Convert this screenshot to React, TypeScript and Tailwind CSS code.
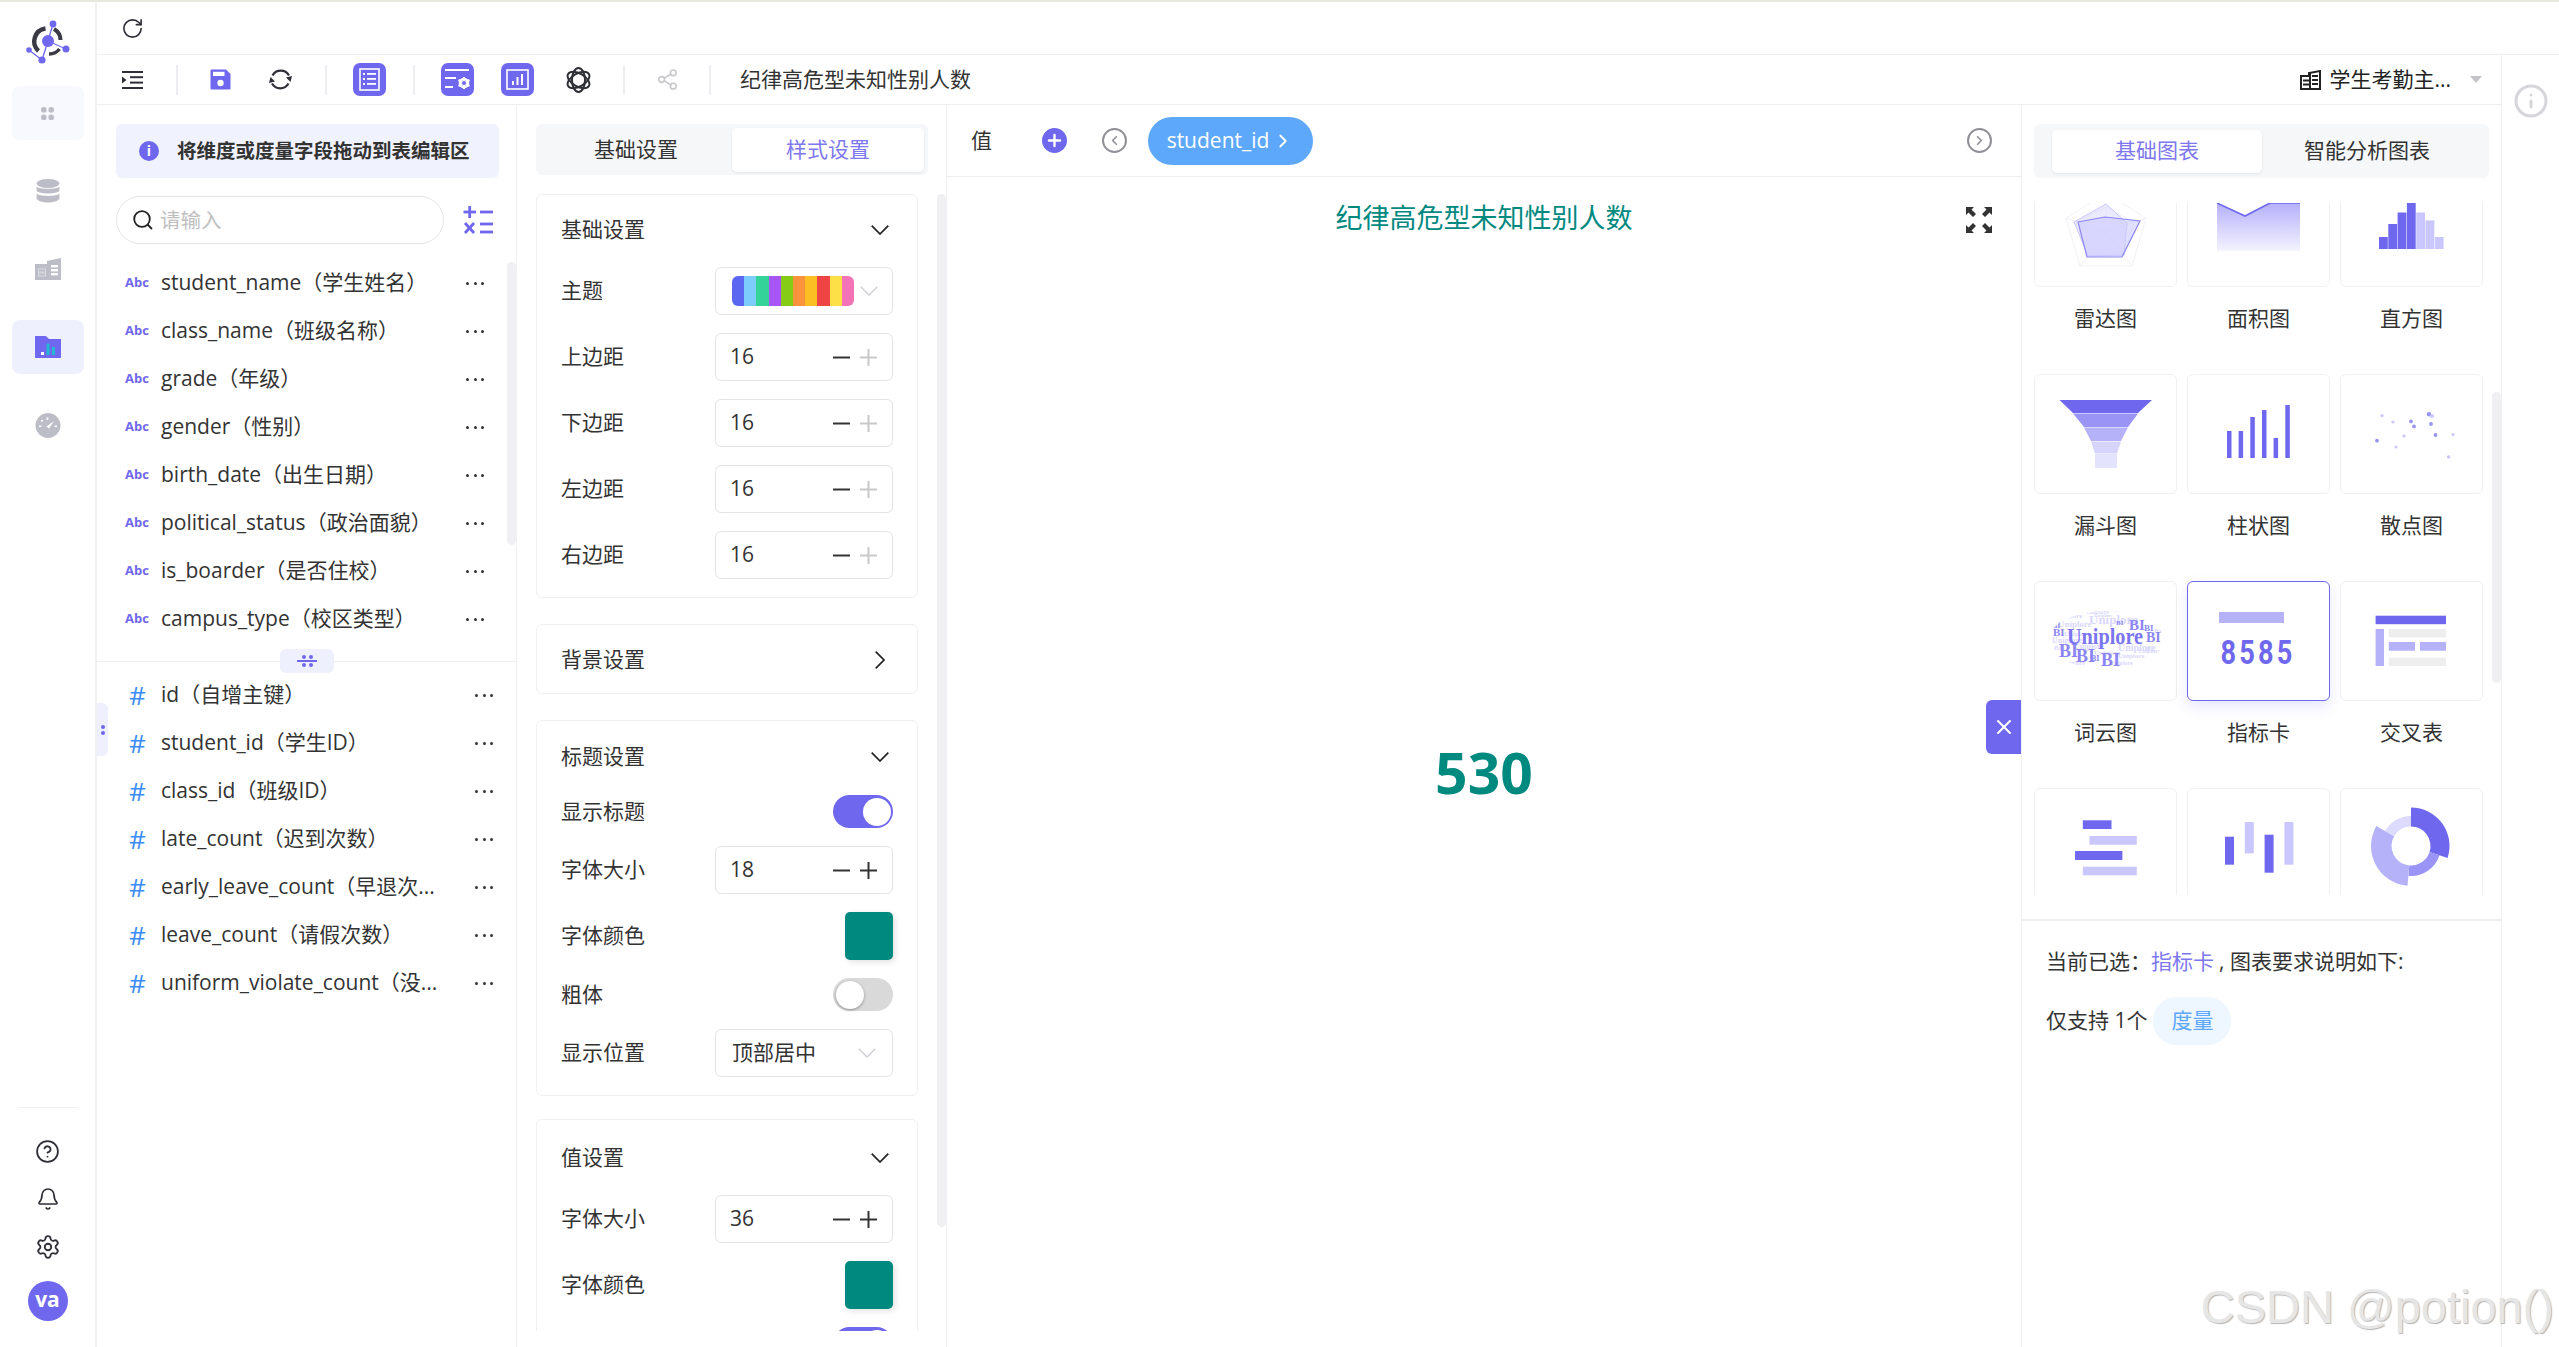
import React from "react";
import { RotateCw, Share2, CircleHelp, Bell, Settings, Info, ChevronLeft, ChevronRight as ChevR, Plus, X } from "lucide-react";

const P = "#6f68ee";
const L = "#b5b2fa";
const XL = "#c9c7fd";

const dims = [
  "student_name（学生姓名）",
  "class_name（班级名称）",
  "grade（年级）",
  "gender（性别）",
  "birth_date（出生日期）",
  "political_status（政治面貌）",
  "is_boarder（是否住校）",
  "campus_type（校区类型）",
];
const meas = [
  "id（自增主键）",
  "student_id（学生ID）",
  "class_id（班级ID）",
  "late_count（迟到次数）",
  "early_leave_count（早退次...",
  "leave_count（请假次数）",
  "uniform_violate_count（没...",
];
const theme = ["#5b67f0", "#7ccdfc", "#34d399", "#a855f7", "#84cc16", "#fb923c", "#fbbf24", "#ef4444", "#fde047", "#f472b6"];

function Dots() {
  return (
    <div className="flex w-[18px] justify-between">
      <span className="h-[3px] w-[3px] rounded-full bg-[#333]" />
      <span className="h-[3px] w-[3px] rounded-full bg-[#333]" />
      <span className="h-[3px] w-[3px] rounded-full bg-[#333]" />
    </div>
  );
}

function Sep() {
  return <div className="h-[30px] w-[2px] bg-[#eeeef2]" />;
}

function Logo() {
  return (
    <svg width="48" height="48" viewBox="0 0 48 48">
      <g stroke={P} strokeWidth="1.3">
        <line x1="24" y1="23" x2="29" y2="6" />
        <line x1="24" y1="23" x2="42" y2="31" />
        <line x1="24" y1="23" x2="18" y2="42" />
        <line x1="5" y1="32" x2="18" y2="42" />
      </g>
      <path d="M14.500 33 A13 13 0 0 1 21.500 10.500" fill="none" stroke="#3a3a44" strokeWidth="4.400" />
      <path d="M30 11 A13 13 0 0 1 36.500 22" fill="none" stroke="#3a3a44" strokeWidth="4" />
      <path d="M35.500 31 A13 13 0 0 1 25 36" fill="none" stroke="#3a3a44" strokeWidth="3.600" />
      <circle cx="24" cy="23" r="6" fill={P} />
      <circle cx="29" cy="6" r="3.400" fill={P} />
      <circle cx="5" cy="32" r="2.800" fill={P} />
      <circle cx="42" cy="31" r="3.500" fill={P} />
      <circle cx="18" cy="42" r="3.600" fill={P} />
    </svg>
  );
}

function NavDash() {
  return (
    <svg width="13" height="13" viewBox="0 0 13 13" fill="#bdbdc7">
      <rect x="0" y="0" width="5.6" height="5.6" rx="2.6" />
      <rect x="7.4" y="0" width="5.6" height="5.6" rx="2.6" />
      <rect x="0" y="7.4" width="5.6" height="5.6" rx="2.6" />
      <rect x="7.4" y="7.4" width="5.6" height="5.6" rx="2.6" />
    </svg>
  );
}
function NavDb() {
  return (
    <svg width="24" height="24" viewBox="0 0 24 24" fill="#bdbdc7">
      <ellipse cx="12" cy="4.5" rx="11.5" ry="4.5" />
      <path d="M.5 7.5c2 3.2 21 3.2 23 0v4c-1 4-22 4-23 0z" />
      <path d="M.5 14.5c2 3.2 21 3.2 23 0v4.5c-1 6-22 6-23 0z" />
    </svg>
  );
}
function NavCard() {
  return (
    <svg width="26" height="22" viewBox="0 0 26 22">
      <path d="M0 6h12V3l14-3v22H0z" fill="#bdbdc7" />
      <g fill="#fff">
        <rect x="16" y="7" width="7" height="2.4" />
        <rect x="16" y="11" width="7" height="2.4" />
        <rect x="16" y="15" width="7" height="2.4" />
      </g>
      <g stroke="#d9d9e0" fill="none" strokeWidth="1">
        <rect x="3.5" y="11" width="7" height="3" />
        <rect x="3.5" y="15" width="7" height="3" />
      </g>
    </svg>
  );
}
function NavFolder() {
  return (
    <svg width="26" height="22" viewBox="0 0 26 22">
      <path d="M0 0h11l3 3h12v19H0z" fill={P} />
      <rect x="6" y="16" width="3" height="3" fill="#fff" />
      <rect x="11.5" y="7.5" width="3" height="11.5" fill="#22b8cf" />
      <rect x="17" y="11" width="3" height="8" fill="#22b8cf" />
    </svg>
  );
}
function NavGauge() {
  return (
    <svg width="26" height="25" viewBox="0 0 26 25">
      <circle cx="13" cy="12.5" r="12.5" fill="#bdbdc7" />
      <path d="M11.5 13.5 19 8l-5 7.5z" fill="#fff" />
      <g fill="#fff">
        <rect x="4" y="12.5" width="2.4" height="1.6" />
        <rect x="11.6" y="4.4" width="1.8" height="2.4" />
        <rect x="6" y="7" width="2" height="1.6" />
        <rect x="19.6" y="12.5" width="2.4" height="1.6" />
      </g>
    </svg>
  );
}

function IcOutdent() {
  return (
    <svg width="21" height="18" viewBox="0 0 21 18" fill="#2f2f37">
      <rect x="0" y="0" width="21" height="2" />
      <rect x="8" y="5.2" width="13" height="2" />
      <rect x="8" y="10.6" width="13" height="2" />
      <rect x="0" y="16" width="21" height="2" />
      <path d="M0 5.5 4.5 9 0 12.5z" />
    </svg>
  );
}
function IcSave() {
  return (
    <svg width="21" height="21" viewBox="0 0 21 21">
      <path d="M1.5 0.5H16l4.5 4.5v14.5a1 1 0 0 1-1 1h-18a1 1 0 0 1-1-1V1.5a1 1 0 0 1 1-1z" fill={P} />
      <rect x="3" y="2.8" width="11.5" height="4.2" fill="#fff" />
      <circle cx="10.5" cy="14" r="3.2" fill="#fff" />
    </svg>
  );
}
function IcSync() {
  return (
    <svg width="23" height="23" viewBox="0 0 23 23" fill="none" stroke="#2f2f37" strokeWidth="2.2">
      <path d="M3.5 7.5A9.5 9.5 0 0 1 20 7.5" />
      <path d="M19.5 15.5A9.5 9.5 0 0 1 3 15.5" />
      <path d="M23 8 21.5 14 17 9.5z" fill="#2f2f37" stroke="none" />
      <path d="M0 15 1.5 9 6 13.5z" fill="#2f2f37" stroke="none" />
    </svg>
  );
}
function IcList() {
  return (
    <div className="flex h-[33px] w-[33px] items-center justify-center rounded-[7px] bg-[#6f68ee]">
      <svg width="21" height="23" viewBox="0 0 21 23" fill="none" stroke="#fff" strokeWidth="1.6">
        <rect x="1" y="1" width="19" height="21" />
        <g fill="#fff" stroke="none">
          <rect x="4" y="5" width="2" height="2" />
          <rect x="8" y="5" width="9" height="1.8" />
          <rect x="4" y="10" width="2" height="2" />
          <rect x="8" y="10" width="9" height="1.8" />
          <rect x="4" y="15" width="2" height="2" />
          <rect x="8" y="15" width="9" height="1.8" />
        </g>
      </svg>
    </div>
  );
}
function IcChartCfg() {
  return (
    <div className="flex h-[33px] w-[33px] items-center justify-center rounded-[7px] bg-[#6f68ee]">
      <svg width="27" height="21" viewBox="0 0 27 21" fill="#fff">
        <rect x="1" y="0" width="24" height="2" />
        <rect x="1" y="8" width="11" height="2" />
        <rect x="1" y="17" width="8" height="2" />
        <circle cx="20" cy="14" r="4" fill="none" stroke="#fff" strokeWidth="2.6" />
        <g stroke="#fff" strokeWidth="2">
          <line x1="20" y1="8" x2="20" y2="20" />
          <line x1="14.5" y1="11" x2="25.5" y2="17" />
          <line x1="14.5" y1="17" x2="25.5" y2="11" />
        </g>
        <circle cx="20" cy="14" r="2" fill={P} />
      </svg>
    </div>
  );
}
function IcChartBox() {
  return (
    <div className="flex h-[33px] w-[33px] items-center justify-center rounded-[7px] bg-[#6f68ee]">
      <svg width="23" height="21" viewBox="0 0 23 21" fill="none" stroke="#fff" strokeWidth="1.6">
        <rect x="1" y="1" width="21" height="19" />
        <g fill="#fff" stroke="none">
          <rect x="6" y="12" width="2" height="4" />
          <rect x="10.5" y="8" width="2" height="8" />
          <rect x="15" y="5" width="2" height="11" />
        </g>
      </svg>
    </div>
  );
}
function IcAtom() {
  return (
    <svg width="25" height="26" viewBox="0 0 25 26" fill="none" stroke="#2f2f37" strokeWidth="2">
      <ellipse cx="12.5" cy="13" rx="6.500" ry="12" />
      <ellipse cx="12.5" cy="13" rx="6.500" ry="12" transform="rotate(60 12.5 13)" />
      <ellipse cx="12.5" cy="13" rx="6.500" ry="12" transform="rotate(-60 12.5 13)" />
    </svg>
  );
}
function IcOps() {
  return (
    <svg width="30" height="30" viewBox="0 0 30 30" stroke={P} strokeWidth="2.8" fill="none">
      <line x1="0.5" y1="7" x2="13" y2="7" />
      <line x1="6.7" y1="1" x2="6.7" y2="13" />
      <line x1="17" y1="7" x2="30" y2="7" />
      <line x1="2" y1="18" x2="11" y2="28" />
      <line x1="11" y1="18" x2="2" y2="28" />
      <line x1="17" y1="19" x2="30" y2="19" />
      <line x1="17" y1="27" x2="30" y2="27" />
    </svg>
  );
}
function IcSearch() {
  return (
    <svg width="20" height="20" viewBox="0 0 20 20" fill="none" stroke="#222" strokeWidth="1.8">
      <circle cx="9" cy="9" r="7.8" />
      <line x1="14.5" y1="14.5" x2="19" y2="19" />
    </svg>
  );
}
function IcFull() {
  return (
    <svg width="26" height="26" viewBox="0 0 26 26" fill="#333">
      <path d="M0 0h8L5.5 2.5 10 7 7 10 2.5 5.5 0 8z" />
      <path d="M26 0h-8l2.500 2.500L16 7l3 3 4.500-4.500L26 8z" />
      <path d="M0 26h8l-2.500-2.500L10 19l-3-3-4.500 4.500L0 18z" />
      <path d="M26 26h-8l2.500-2.500L16 19l3-3 4.500 4.500L26 18z" />
    </svg>
  );
}
function IcBuilding() {
  return (
    <svg width="21" height="20" viewBox="0 0 21 20">
      <path d="M1 6h8V3l11-2v18H1z" fill="none" stroke="#222" strokeWidth="2" />
      <g fill="#222">
        <rect x="12" y="5" width="6" height="2" />
        <rect x="12" y="9" width="6" height="2" />
        <rect x="12" y="13" width="6" height="2" />
        <rect x="3" y="9.500" width="6" height="2" />
        <rect x="3" y="13.500" width="6" height="2" />
        <rect x="9" y="3" width="2" height="16" />
      </g>
    </svg>
  );
}
function MinusIc() {
  return (
    <svg width="17" height="17" viewBox="0 0 17 17" stroke="#333" strokeWidth="2">
      <line x1="0" y1="8.500" x2="17" y2="8.500" />
    </svg>
  );
}
function PlusIc({ dim }: { dim?: boolean }) {
  return (
    <svg width="17" height="17" viewBox="0 0 17 17" stroke={dim ? "#c8c8c8" : "#333"} strokeWidth="2">
      <line x1="0" y1="8.500" x2="17" y2="8.500" />
      <line x1="8.500" y1="0" x2="8.500" y2="17" />
    </svg>
  );
}
function CaretDown({ gray }: { gray?: boolean }) {
  return (
    <svg width="18" height="10" viewBox="0 0 18 10" fill="none" stroke={gray ? "#cfcfd4" : "#222"} strokeWidth={gray ? 1.4 : 1.7}>
      <path d="M0.7 0.7 9 9 17.300 0.700" />
    </svg>
  );
}
function CaretRight() {
  return (
    <svg width="10" height="18" viewBox="0 0 10 18" fill="none" stroke="#222" strokeWidth="1.7">
      <path d="M0.700 0.700 9 9 0.700 17.300" />
    </svg>
  );
}

function Stepper({ v, dim }: { v: string; dim?: boolean }) {
  return (
    <div className="flex h-[48px] w-[178px] items-center rounded-[6px] border border-[#e3e3e8] pl-[14px] pr-[15px] text-[21px] text-[#333]">
      <span className="flex-1">{v}</span>
      <MinusIc />
      <div className="ml-[10px]"><PlusIc dim={dim} /></div>
    </div>
  );
}
function Row({ label, children }: { label?: string; children: React.ReactNode }) {
  return (
    <div className="flex items-center justify-between text-[21px] text-[#333]">
      <span>{label}</span>
      {children}
    </div>
  );
}
function Toggle({ on }: { on?: boolean }) {
  return on ? (
    <div className="flex h-[33px] w-[60px] items-center justify-end rounded-full bg-[#6f68ee] pr-[2px]">
      <span className="h-[28px] w-[28px] rounded-full bg-white" />
    </div>
  ) : (
    <div className="flex h-[33px] w-[60px] items-center rounded-full bg-[#d9d9d9] pl-[3px]">
      <span className="h-[28px] w-[28px] rounded-full bg-white shadow-[0_1px_3px_rgba(0,0,0,0.35)]" />
    </div>
  );
}
function Swatch() {
  return <div className="h-[48px] w-[48px] rounded-[5px] bg-[#00897f] shadow-[2px_2px_6px_rgba(0,0,0,0.12)]" />;
}
function Card({ title, head, open, children, cls }: { title: string; head: string; open?: boolean; children?: React.ReactNode; cls?: string }) {
  return (
    <div className={"w-[382px] rounded-[6px] border border-[#f0f0f3] px-[24px] " + (cls ?? "")}>
      <div className={"flex items-center justify-between pr-[4px] text-[21px] text-[#333] " + head}>
        <span>{title}</span>
        {open ? <CaretDown /> : <div className="pr-[4px]"><CaretRight /></div>}
      </div>
      {children}
    </div>
  );
}

function arc(cx: number, cy: number, r0: number, r1: number, a0: number, a1: number) {
  const p = (r: number, a: number) => {
    const t = ((a - 90) * Math.PI) / 180;
    return `${(cx + r * Math.cos(t)).toFixed(2)} ${(cy + r * Math.sin(t)).toFixed(2)}`;
  };
  const big = a1 - a0 > 180 ? 1 : 0;
  return `M${p(r1, a0)}A${r1} ${r1} 0 ${big} 1 ${p(r1, a1)}L${p(r0, a1)}A${r0} ${r0} 0 ${big} 0 ${p(r0, a0)}Z`;
}

const C = ({ children }: { children: React.ReactNode }) => (
  <svg width="143" height="120" viewBox="0 0 143 120" className="block">
    {children}
  </svg>
);

const lightWords: [number, number, number, string][] = [
  [22, 37, 7, "Uniplore"], [52, 33, 6, "Uniplore"], [80, 31, 6, "BI"], [24, 46, 9, "Uniplore"], [55, 43, 13, "Uniplore"],
  [18, 62, 8, "Uniplore"], [20, 69, 7, "BI"], [28, 84, 6, "Uniplore"], [84, 70, 10, "Uniplore"], [84, 77, 7, "Uniplore"],
  [40, 68, 8, "Uniplore"], [76, 84, 6, "Uniplore"], [60, 74, 7, "Uniplore"], [104, 72, 6, "Uniplore"], [50, 92, 5, "Uniplore"],
  [120, 52, 7, "BI"], [112, 70, 7, "BI"], [30, 55, 7, "Uniplore"], [60, 36, 5, "Uniplore"],
];

const charts: { key: string; name?: string; sel?: boolean; el: React.ReactNode }[] = [
  {
    key: "a",
    name: "雷达图",
    el: (
      <C>
        <g fill="none" stroke="#f1f1f6">
          <polygon points="72,26 112,51 98,99 46,99 32,51" />
          <polygon points="72,40 100,55 90,88 54,88 42,55" />
          <line x1="72" y1="65" x2="72" y2="26" />
          <line x1="72" y1="65" x2="112" y2="51" />
          <line x1="72" y1="65" x2="98" y2="99" />
          <line x1="72" y1="65" x2="46" y2="99" />
          <line x1="72" y1="65" x2="32" y2="51" />
        </g>
        <polygon points="72,37 93,56 90,88 54,89 40,55" fill="#dcdafd" fillOpacity="0.6" stroke="#c9c7fd" />
        <polygon points="44,55 71,50 106,54 88,90 53,90" fill="#c9c7fd" fillOpacity="0.55" stroke="#8d87f2" strokeWidth="1.2" />
      </C>
    ),
  },
  {
    key: "b",
    name: "面积图",
    el: (
      <C>
        <defs>
          <linearGradient id="ga" x1="0" y1="0" x2="0" y2="1">
            <stop offset="0" stopColor="#b5b0fa" />
            <stop offset="1" stopColor="#f4f3ff" />
          </linearGradient>
        </defs>
        <path d="M30 36 58 49 83 36H113V84H30z" fill="url(#ga)" />
        <path d="M30 36 58 49 83 36H113" fill="none" stroke={P} strokeWidth="1.6" />
      </C>
    ),
  },
  {
    key: "c",
    name: "直方图",
    el: (
      <C>
        <g fill={P}>
          <rect x="39" y="70" width="8.800" height="12" />
          <rect x="48.300" y="57" width="8.800" height="25" />
          <rect x="57.600" y="45.500" width="8.800" height="36.500" />
          <rect x="66.900" y="30" width="8.800" height="52" />
        </g>
        <g fill={XL}>
          <rect x="76.200" y="45.500" width="8.800" height="36.500" />
          <rect x="85.500" y="53.400" width="8.800" height="28.600" />
          <rect x="94.800" y="70" width="8.800" height="12" />
        </g>
      </C>
    ),
  },
  {
    key: "d",
    name: "漏斗图",
    el: (
      <C>
        <path d="M25.500 26H118L104 39H39z" fill={P} />
        <path d="M39 39.500H104L94 53H50z" fill="#9994f5" />
        <path d="M50 53.500H94L87 67H57z" fill="#b5b2fa" />
        <path d="M57 67.500H87L83 79.500H61z" fill="#d6d4fc" />
        <rect x="61" y="80" width="22" height="14" fill="#e4e3fd" />
      </C>
    ),
  },
  {
    key: "e",
    name: "柱状图",
    el: (
      <C>
        <g fill={P}>
          <rect x="40" y="57" width="4.500" height="27" />
          <rect x="51.600" y="57" width="4.500" height="27" />
          <rect x="63.300" y="43" width="4.500" height="41" />
          <rect x="75" y="36" width="4.500" height="48" />
          <rect x="86.600" y="64" width="4.500" height="20" />
          <rect x="98.300" y="31" width="4.500" height="53" />
        </g>
      </C>
    ),
  },
  {
    key: "f",
    name: "散点图",
    el: (
      <C>
        {[
          [42, 41.700, 1.600, "#c9c7fd"],
          [53, 48, 1.600, "#c9c7fd"],
          [71, 47.400, 1.900, "#9994f5"],
          [74, 52.400, 1.900, "#9994f5"],
          [89, 40.300, 2.300, "#9994f5"],
          [92, 42, 2, "#c9c7fd"],
          [91, 50, 1.900, "#9994f5"],
          [95.500, 61, 1.900, "#9994f5"],
          [113, 60.600, 1.600, "#c9c7fd"],
          [64, 62, 1.600, "#c9c7fd"],
          [37, 66.700, 1.900, "#9994f5"],
          [56, 73, 1.500, "#c9c7fd"],
          [108.600, 83, 1.700, "#c9c7fd"],
        ].map((d, i) => (
          <circle key={i} cx={d[0] as number} cy={d[1] as number} r={d[2] as number} fill={d[3] as string} />
        ))}
      </C>
    ),
  },
  {
    key: "g",
    name: "词云图",
    el: (
      <C>
        <defs>
          <clipPath id="cloud">
            <ellipse cx="72" cy="59" rx="58" ry="29" />
          </clipPath>
        </defs>
        <g clipPath="url(#cloud)" fontFamily="'Liberation Serif',serif" fontWeight="700">
          <g fill="#d9d7fd">
            {lightWords.map((w, i) => (
              <text key={i} x={w[0]} y={w[1]} fontSize={w[2]}>{w[3]}</text>
            ))}
          </g>
          <text x="33" y="62.500" fontSize="23" textLength="76" lengthAdjust="spacingAndGlyphs" fill="#7a74f0">Uniplore</text>
          <g fill="#8a85f3">
            <text x="95" y="49" fontSize="15">BI</text>
            <text x="110" y="50" fontSize="9">BI</text>
            <text x="18" y="47" fontSize="8">BI</text>
            <text x="19" y="55" fontSize="11">BI</text>
            <text x="112" y="61" fontSize="14">BI</text>
            <text x="25" y="76" fontSize="18">BI</text>
            <text x="42" y="81" fontSize="18">BI</text>
            <text x="67" y="85" fontSize="18">BI</text>
            <text x="57" y="80" fontSize="8">BI</text>
            <text x="82" y="44" fontSize="7">BI</text>
          </g>
        </g>
      </C>
    ),
  },
  {
    key: "h",
    name: "指标卡",
    sel: true,
    el: (
      <C>
        <rect x="32" y="31" width="65" height="11" fill={L} />
        <text transform="translate(71 83) scale(0.8 1)" textAnchor="middle" fontFamily="Roboto,sans-serif" fontWeight="700" fontSize="34" letterSpacing="4" fill={P}>
          8585
        </text>
      </C>
    ),
  },
  {
    key: "i",
    name: "交叉表",
    el: (
      <C>
        <rect x="35.600" y="34.700" width="70.400" height="8.500" fill={P} />
        <rect x="35.600" y="48" width="8.400" height="37" fill={L} />
        <rect x="48.800" y="48" width="57.200" height="8.300" fill="#eeeeef" />
        <rect x="48.800" y="61" width="26.200" height="8.700" fill={L} />
        <rect x="80" y="61" width="26" height="8.700" fill={L} />
        <rect x="48.800" y="76.700" width="57.200" height="8.300" fill="#eeeeef" />
      </C>
    ),
  },
  {
    key: "j",
    el: (
      <C>
        <rect x="48.800" y="32.300" width="28.700" height="8.700" fill={P} />
        <rect x="55.400" y="48" width="47.400" height="8.700" fill={XL} />
        <rect x="41" y="63" width="47.400" height="9" fill={P} />
        <rect x="48.800" y="78.700" width="54" height="8.600" fill={XL} />
      </C>
    ),
  },
  {
    key: "k",
    el: (
      <C>
        <rect x="38" y="48.700" width="9" height="28" fill={P} />
        <rect x="57.800" y="34" width="9" height="31.300" fill={XL} />
        <rect x="77.600" y="46.700" width="9" height="38" fill={P} />
        <rect x="97.400" y="34" width="9" height="42.700" fill={XL} />
      </C>
    ),
  },
  {
    key: "l",
    el: (
      <C>
        <path d={arc(71, 58, 19.500, 38.500, 0, 108)} fill={P} />
        <path d={arc(71, 58, 19.500, 30, 108, 185)} fill="#9994f5" />
        <path d={arc(71, 58, 19.500, 40, 185, 300)} fill={L} />
        <path d={arc(71, 58, 19.500, 30, 300, 360)} fill="#dcdafd" />
      </C>
    ),
  },
];

export default function App() {
  return (
    <div className="relative flex h-[1347px] w-[2559px] overflow-hidden border-t-2 border-[#e8eadf] bg-white font-['Open_Sans','Noto_Sans_CJK_SC',sans-serif] text-[#333]">
      {/* sidebar */}
      <div className="flex w-[97px] shrink-0 flex-col items-center border-r-2 border-[#f1f1f4]">
        <div className="flex h-[84px] w-full items-center justify-center pb-[5px]">
          <Logo />
        </div>
        <div className="flex flex-col gap-[24px]">
          <div className="flex h-[54px] w-[72px] items-center justify-center rounded-[8px] bg-[#f8f9fe]"><NavDash /></div>
          <div className="flex h-[54px] w-[72px] items-center justify-center"><NavDb /></div>
          <div className="flex h-[54px] w-[72px] items-center justify-center"><NavCard /></div>
          <div className="flex h-[54px] w-[72px] items-center justify-center rounded-[8px] bg-[#eff0fe]"><NavFolder /></div>
          <div className="flex h-[54px] w-[72px] items-center justify-center"><NavGauge /></div>
        </div>
        <div className="flex-1" />
        <div className="mb-[19px] h-px w-[60px] bg-[#f0f0f3]" />
        <div className="flex h-[48px] items-center"><CircleHelp size={25} strokeWidth={1.7} className="text-[#2f2f37]" /></div>
        <div className="flex h-[48px] items-center"><Bell size={24} strokeWidth={1.7} className="text-[#2f2f37]" /></div>
        <div className="flex h-[48px] items-center"><Settings size={26} strokeWidth={1.7} className="text-[#2f2f37]" /></div>
        <div className="mb-[26px] mt-[10px] flex h-[40px] w-[40px] items-center justify-center rounded-full bg-[#6f68ee] pb-[3px] text-[21px] font-bold text-white">va</div>
      </div>

      {/* main */}
      <div className="flex min-w-0 flex-1 flex-col">
        <div className="flex h-[53px] shrink-0 items-center border-b border-[#eeeef2] pl-[24px]">
          <RotateCw size={23} strokeWidth={1.7} className="text-[#2f2f37]" />
        </div>
        <div className="flex min-h-0 flex-1">
          <div className="flex w-[2405px] shrink-0 flex-col border-r border-[#f0f0f3]">
            {/* toolbar */}
            <div className="flex h-[50px] shrink-0 items-center border-b border-[#eeeef2] pl-[25px] pr-[19px]">
              <IcOutdent />
              <div className="ml-[33px]"><Sep /></div>
              <div className="ml-[32px]"><IcSave /></div>
              <div className="ml-[38px]"><IcSync /></div>
              <div className="ml-[33px]"><Sep /></div>
              <div className="ml-[26px]"><IcList /></div>
              <div className="ml-[27px]"><Sep /></div>
              <div className="ml-[26px]"><IcChartCfg /></div>
              <div className="ml-[27px]"><IcChartBox /></div>
              <div className="ml-[32px]"><IcAtom /></div>
              <div className="ml-[32px]"><Sep /></div>
              <div className="ml-[31px]"><Share2 size={23} strokeWidth={1.6} className="text-[#c8c8cc]" /></div>
              <div className="ml-[30px]"><Sep /></div>
              <span className="ml-[29px] text-[21px] text-[#333]">纪律高危型未知性别人数</span>
              <div className="flex-1" />
              <IcBuilding />
              <span className="ml-[8px] text-[21px] text-[#222]">学生考勤主...</span>
              <div className="ml-[19px] h-0 w-0 border-x-[6px] border-t-[7px] border-x-transparent border-t-[#c4c4c8]" />
            </div>

            {/* panels */}
            <div className="flex min-h-0 flex-1">
              {/* fields */}
              <div className="relative w-[420px] shrink-0 border-r border-[#f0f0f3]">
                <div className="absolute right-0 top-[157px] h-[283px] w-[9px] rounded-full bg-[#f0f0f3]" />
                <div className="absolute left-0 top-[598px] flex h-[53px] w-[11px] flex-col items-center justify-center gap-[2px] rounded-r-[6px] bg-[#eef0fd]">
                  <span className="h-[4px] w-[4px] rounded-full bg-[#6f68ee]" />
                  <span className="h-[4px] w-[4px] rounded-full bg-[#6f68ee]" />
                </div>
                <div className="ml-[19px] mt-[19px] flex h-[54px] w-[383px] items-center rounded-[6px] bg-[#f0f2fd] pl-[23px] text-[19.5px] font-bold text-[#333]">
                  <div className="flex h-[20px] w-[20px] items-center justify-center rounded-full bg-[#6f68ee] text-[14px] font-bold leading-none text-white">i</div>
                  <span className="ml-[18px]">将维度或度量字段拖动到表编辑区</span>
                </div>
                <div className="ml-[19px] mt-[18px] flex items-center">
                  <div className="flex h-[48px] w-[328px] items-center rounded-full border border-[#e5e5e8] pl-[16px]">
                    <IcSearch />
                    <span className="ml-[7px] text-[20.5px] text-[#bfbfbf]">请输入</span>
                  </div>
                  <div className="ml-[19px]"><IcOps /></div>
                </div>
                <div className="mt-[15px]">
                  {dims.map((d) => (
                    <div key={d} className="flex h-[48px] items-center pl-[28px] pr-[32px]">
                      <span className="w-[36px] text-[13px] font-bold text-[#6f68ee]">Abc</span>
                      <span className="flex-1 text-[21px] text-[#333]">{d}</span>
                      <Dots />
                    </div>
                  ))}
                </div>
                <div className="relative mt-[18px] h-px bg-[#eeeef2]">
                  <div className="absolute left-[183px] top-[-12px] flex h-[24px] w-[54px] flex-col items-center justify-center gap-[1px] rounded-[6px] bg-[#eef0fd]">
                    <div className="flex gap-[3px]"><span className="h-[4px] w-[4px] rounded-full bg-[#6f68ee]" /><span className="h-[4px] w-[4px] rounded-full bg-[#6f68ee]" /></div>
                    <div className="h-[2px] w-[20px] bg-[#6f68ee]" />
                    <div className="flex gap-[3px]"><span className="h-[4px] w-[4px] rounded-full bg-[#6f68ee]" /><span className="h-[4px] w-[4px] rounded-full bg-[#6f68ee]" /></div>
                  </div>
                </div>
                <div className="mt-[9px]">
                  {meas.map((d) => (
                    <div key={d} className="flex h-[48px] items-center pl-[32px] pr-[23px]">
                      <span className="w-[32px] text-[26px] font-medium leading-none text-[#3b8cf5]">#</span>
                      <span className="flex-1 text-[21px] text-[#333]">{d}</span>
                      <Dots />
                    </div>
                  ))}
                </div>
              </div>

              {/* settings */}
              <div className="relative w-[430px] shrink-0 border-r border-[#f0f0f3]">
                <div className="absolute right-0 top-[89px] h-[1033px] w-[9px] rounded-full bg-[#f0f0f3]" />
                <div className="h-[1226px] overflow-hidden pl-[19px]">
                  <div className="mt-[19px] flex h-[51px] w-[392px] items-center rounded-[6px] bg-[#f6f7f9] px-[4px] pt-px text-[21px]">
                    <span className="flex-1 text-center text-[#333]">基础设置</span>
                    <span className="flex h-[44px] w-[192px] items-center justify-center rounded-[5px] bg-white text-[#7d77f0] shadow-[0_1px_3px_rgba(0,0,0,0.08)]">样式设置</span>
                  </div>
                  <div className="mt-[19px] flex flex-col gap-[26px]">
                    <Card title="基础设置" head="h-[72px] pb-[2px]" open cls="pb-[18px]">
                      <div className="flex flex-col gap-[18px]">
                        <Row label="主题">
                          <div className="flex h-[48px] w-[178px] items-center rounded-[6px] border border-[#e3e3e8] pl-[16px]">
                            <div className="flex h-[30px] w-[122px] overflow-hidden rounded-[6px]">
                              {theme.map((c) => (
                                <span key={c} className="flex-1" style={{ background: c }} />
                              ))}
                            </div>
                            <div className="ml-[6px]"><CaretDown gray /></div>
                          </div>
                        </Row>
                        <Row label="上边距"><Stepper v="16" dim /></Row>
                        <Row label="下边距"><Stepper v="16" dim /></Row>
                        <Row label="左边距"><Stepper v="16" dim /></Row>
                        <Row label="右边距"><Stepper v="16" dim /></Row>
                      </div>
                    </Card>
                    <Card title="背景设置" head="h-[68px] pt-[2px]" />
                    <Card title="标题设置" head="h-[74px] pb-[2px]" open cls="pb-[18px]">
                      <div className="flex flex-col gap-[18px]">
                        <Row label="显示标题"><Toggle on /></Row>
                        <Row label="字体大小"><Stepper v="18" /></Row>
                        <Row label="字体颜色"><Swatch /></Row>
                        <Row label="粗体"><Toggle /></Row>
                        <Row label="显示位置">
                          <div className="flex h-[48px] w-[178px] items-center justify-between rounded-[6px] border border-[#e3e3e8] pl-[16px] pr-[16px]">
                            <span>顶部居中</span>
                            <CaretDown gray />
                          </div>
                        </Row>
                      </div>
                    </Card>
                    <Card title="值设置" head="h-[75px]" open cls="-mt-[3px]">
                      <div className="flex flex-col gap-[18px]">
                        <Row label="字体大小"><Stepper v="36" /></Row>
                        <Row label="字体颜色"><Swatch /></Row>
                        <Row><Toggle on /></Row>
                      </div>
                    </Card>
                  </div>
                </div>
              </div>

              {/* canvas */}
              <div className="relative flex min-w-0 flex-1 flex-col">
                <div className="flex h-[72px] shrink-0 items-center border-b border-[#eeeef2] pl-[24px] pr-[29px]">
                  <span className="w-[71px] text-[21px] text-[#333]">值</span>
                  <div className="flex h-[25px] w-[25px] items-center justify-center rounded-full bg-[#6f68ee]"><Plus size={19} strokeWidth={3} className="text-white" /></div>
                  <div className="ml-[35px] flex h-[25px] w-[25px] items-center justify-center rounded-full border-[2.5px] border-[#8f8f96]"><ChevronLeft size={15} strokeWidth={2.6} className="text-[#8f8f96]" /></div>
                  <div className="ml-[21px] flex h-[48px] w-[165px] items-center justify-center rounded-full bg-[#5ea8fb] text-[21px] text-white">
                    student_id
                    <ChevR size={22} strokeWidth={2} className="ml-[3px]" />
                  </div>
                  <div className="flex-1" />
                  <div className="flex h-[25px] w-[25px] items-center justify-center rounded-full border-[2.5px] border-[#8f8f96]"><ChevR size={15} strokeWidth={2.6} className="text-[#8f8f96]" /></div>
                </div>
                <div className="relative flex h-[80px] shrink-0 items-center justify-center pt-[2px] text-[27px] text-[#00897f]">
                  纪律高危型未知性别人数
                  <div className="absolute right-[29px] top-[30px]"><IcFull /></div>
                </div>
                <div className="mt-[483px] text-center text-[57px] font-bold leading-[64px] text-[#00897f]">530</div>
                <div className="absolute bottom-[593px] right-[-1px] flex h-[54px] w-[36px] items-center justify-center rounded-l-[6px] bg-[#6f68ee]"><X size={24} strokeWidth={2} className="text-white" /></div>
              </div>

              {/* charts */}
              <div className="relative flex w-[480px] shrink-0 flex-col border-l border-[#f0f0f3]">
                <div className="absolute right-0 top-[287px] h-[291px] w-[9px] rounded-full bg-[#f0f0f3]" />
                <div className="ml-[12px] mt-[19px] flex h-[54px] w-[455px] items-center rounded-[6px] bg-[#f6f7f9] pl-[18px] text-[21px]">
                  <span className="flex h-[43px] w-[210px] items-center justify-center rounded-[5px] bg-white text-[#7d77f0] shadow-[0_1px_3px_rgba(0,0,0,0.08)]">基础图表</span>
                  <span className="flex-1 pr-[17px] text-center text-[#333]">智能分析图表</span>
                </div>
                <div className="ml-[12px] mt-[25px] h-[692px] overflow-hidden">
                  <div className="-mt-[36px] grid w-[448px] grid-cols-[143px_143px_143px] gap-x-[10px]">
                    {charts.map((c) => (
                      <div key={c.key} className="flex flex-col">
                        <div className={c.sel ? "h-[120px] rounded-[6px] border border-[#6f68ee] bg-white shadow-[0_6px_14px_rgba(111,104,238,0.16)]" : "h-[120px] rounded-[6px] border border-[#f0f0f3]"}>
                          <div className="-m-px">{c.el}</div>
                        </div>
                        <div className="mb-[23px] flex h-[64px] items-center justify-center text-[21px] text-[#333]">{c.name}</div>
                      </div>
                    ))}
                  </div>
                </div>
                <div className="mt-[24px] border-t-2 border-[#eeeef2] pl-[24px] text-[21px] text-[#333]">
                  <div className="mt-[26px] flex h-[30px] items-center">
                    当前已选：<span className="text-[#7d77f0]">指标卡</span><span className="ml-[5px]">, 图表要求说明如下:</span>
                  </div>
                  <div className="mt-[20px] flex h-[48px] items-center">
                    仅支持 1个
                    <span className="ml-[6px] flex h-[48px] w-[78px] items-center justify-center rounded-full bg-[#eef6ff] text-[#5ea8fb]">度量</span>
                  </div>
                </div>
              </div>
            </div>
          </div>
          {/* info gutter */}
          <div className="flex flex-1 justify-center pt-[28px]">
            <Info size={36} strokeWidth={2} className="text-[#d6d6da]" />
          </div>
        </div>
      </div>

      <div className="pointer-events-none absolute bottom-[17px] right-[5px] font-['Liberation_Sans',sans-serif] text-[47px] leading-none text-[#e6e6e6] [text-shadow:1px_1px_1px_#b4b4b4]">CSDN @potion()</div>
    </div>
  );
}
